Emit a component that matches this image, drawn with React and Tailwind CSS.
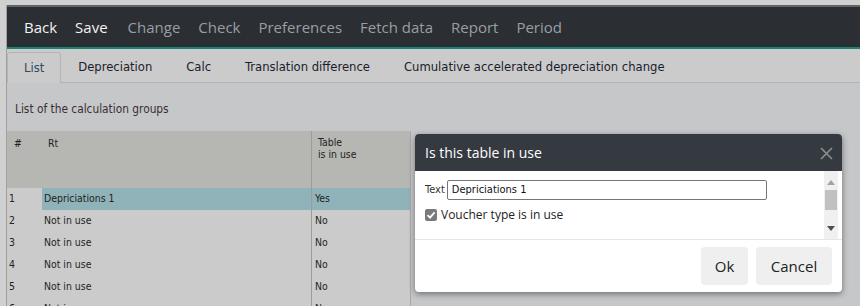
import React from "react";

const navItems = [
  { t: "Back", on: true },
  { t: "Save", on: true },
  { t: "Change", extra: true },
  { t: "Check" },
  { t: "Preferences" },
  { t: "Fetch data" },
  { t: "Report" },
  { t: "Period" },
];

const tabs = ["List", "Depreciation", "Calc", "Translation difference", "Cumulative accelerated depreciation change"];

const rows = [
  ["1", "Depriciations 1", "Yes"],
  ["2", "Not in use", "No"],
  ["3", "Not in use", "No"],
  ["4", "Not in use", "No"],
  ["5", "Not in use", "No"],
  ["6", "Not in use", "No"],
];

const narrow = { fontFamily: '"DejaVu Sans Condensed", Lato, "Liberation Sans", sans-serif' };

export default function App() {
  return (
    <div
      className="relative w-[860px] h-[306px] overflow-hidden bg-[#d0d0d0] text-[#222]"
      style={{ fontFamily: '"Open Sans", "Noto Sans", sans-serif' }}
    >
      <div className="ml-[6px] mt-[5px] min-h-[301px] border-l border-[#a0a0a0] flex flex-col bg-[#c6c7c8]">
        {/* nav bar */}
        <div className="h-[2px] shrink-0 bg-[#5e6468]" />
        <div className="h-[40px] shrink-0 bg-[#2b2e33] flex items-center pl-[17px] gap-[18px] text-[15px]">
          {navItems.map((n) => (
            <span
              key={n.t}
              className={`${n.on ? "text-[#f2f2f2]" : "text-[#9a9ea4]"} ${n.extra ? "ml-[2px]" : ""}`}
            >
              {n.t}
            </span>
          ))}
        </div>
        <div className="h-[2px] shrink-0 bg-[#1b8276]" />
        {/* tabs */}
        <div
          className="h-[34px] shrink-0 bg-[#cbcbcb] border-b border-[#b4b4b4] flex items-end text-[12.9px] text-[#1c1c2c]"
          style={narrow}
        >
          {tabs.map((t, i) =>
            i === 0 ? (
              <div
                key={t}
                className="h-[31px] -mb-px px-[16px] flex items-center border border-b-0 border-[#b4b4b4] rounded-t-[3px] bg-[#cbcbcb] text-[#33485c]"
              >
                {t}
              </div>
            ) : (
              <div key={t} className="h-[31px] flex items-center px-[17px]">
                {t}
              </div>
            )
          )}
        </div>
        {/* subtitle */}
        <div className="h-[48px] shrink-0 pt-[19px] pl-[8px] text-[11.8px] leading-[14px] text-[#3a2e36]" style={narrow}>
          List of the calculation groups
        </div>
        {/* table */}
        <div className="w-[404px] shrink-0 border-r border-[#a8a8a8] text-[10.4px]" style={narrow}>
          <div className="h-[57px] bg-[#b6b6b2] flex">
            <div className="w-[35px] pl-[7px] pt-[5px]">#</div>
            <div className="w-[269px] pl-[6px] pt-[5px]">Rt</div>
            <div className="w-px bg-[#9c9c9a]" />
            <div className="flex-1 pl-[6px] pt-[5px] flex flex-col">
              <span className="leading-[12px]">Table</span>
              <span className="leading-[12px]">is in use</span>
            </div>
          </div>
          {rows.map((r, i) => (
            <div key={r[0]} className="h-[22px] flex bg-[#cbcbcb]">
              <div className="w-[35px] pl-[2px] flex items-center">{r[0]}</div>
              <div className={`w-[269px] pl-[2px] flex items-center ${i === 0 ? "bg-[#8fb3b8]" : ""}`}>{r[1]}</div>
              <div className="w-px bg-[#9c9c9a]" />
              <div className={`flex-1 pl-[3px] flex items-center ${i === 0 ? "bg-[#8fb3b8]" : ""}`}>{r[2]}</div>
            </div>
          ))}
        </div>
      </div>

      {/* modal */}
      <div className="absolute left-[415px] top-[134px] w-[427px] h-[158px] bg-white rounded-[4px] overflow-hidden shadow-[0_2px_6px_rgba(0,0,0,0.45)] flex flex-col">
        <div className="h-[37px] shrink-0 bg-[#353a40] flex items-center justify-between pl-[10px] pr-[9px]">
          <span className="text-white text-[14px]">Is this table in use</span>
          <svg width="13" height="13" viewBox="0 0 13 13" className="mt-[1px]">
            <path d="M1 1 L12 12 M12 1 L1 12" stroke="#8a8f94" strokeWidth="1.6" fill="none" />
          </svg>
        </div>
        <div className="h-[69px] shrink-0 flex border-b border-[#e6e6e6]">
          <div className="flex-1 pl-[10px] pt-[9px]">
            <div className="flex items-center gap-[2px]" style={narrow}>
              <span className="text-[11px] text-[#333]">Text</span>
              <div className="w-[320px] h-[20px] border border-[#767676] rounded-[2px] flex items-center pl-[4px] text-[11px] text-[#111]">
                Depriciations 1
              </div>
            </div>
            <div className="flex items-center gap-[4px] mt-[6px]">
              <div className="w-[12px] h-[12px] rounded-[2px] bg-[#7a7a7a] flex items-center justify-center">
                <svg width="10" height="10" viewBox="0 0 10 10">
                  <path d="M1.5 5.2 L4 7.6 L8.6 2.3" stroke="white" strokeWidth="1.8" fill="none" />
                </svg>
              </div>
              <span className="text-[12px] text-[#222]">Voucher type is in use</span>
            </div>
          </div>
          <div className="w-[14px] bg-[#f0f0f0] flex flex-col items-center mr-[4px]">
            <svg width="8" height="5" viewBox="0 0 8 5" className="mt-[9px]">
              <path d="M0 5 L4 0 L8 5 Z" fill="#a3a3a3" />
            </svg>
            <div className="w-[12px] h-[20px] bg-[#c1c1c1] mt-[5px]" />
            <div className="flex-1" />
            <svg width="8" height="5" viewBox="0 0 8 5" className="mb-[8px]">
              <path d="M0 0 L8 0 L4 5 Z" fill="#505050" />
            </svg>
          </div>
        </div>
        <div className="flex-1 flex items-center justify-end gap-[8px] pr-[10px]">
          <div className="w-[47px] h-[38px] bg-[#efefef] rounded-[4px] flex items-center justify-center text-[15px] text-[#222]">
            Ok
          </div>
          <div className="w-[76px] h-[38px] bg-[#efefef] rounded-[4px] flex items-center justify-center text-[15px] text-[#222]">
            Cancel
          </div>
        </div>
      </div>
    </div>
  );
}
